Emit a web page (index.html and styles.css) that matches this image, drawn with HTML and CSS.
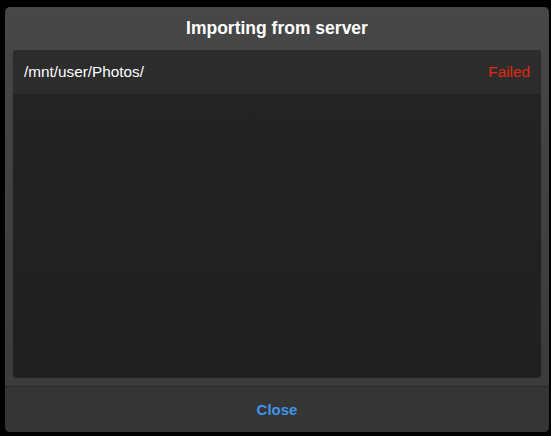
FILE: index.html
```html
<!DOCTYPE html>
<html lang="en">
<head>
    <meta charset="UTF-8">
    <title>Importing from server</title>
    <link rel="stylesheet" href="styles.css">
</head>
<body>
    <div class="dialog">
        <div class="dialog-title">Importing from server</div>
        <div class="dialog-body">
            <div class="list">
                <div class="list-row">
                    <span class="path">/mnt/user/Photos/</span>
                    <span class="status failed">Failed</span>
                </div>
            </div>
        </div>
        <div class="dialog-footer">
            <button class="btn-link">Close</button>
        </div>
    </div>
</body>
</html>
```

FILE: styles.css
```css
:root {
    --dialog-top: #474747;
    --dialog-bottom: #3a3a3a;
    --list-bg: #242424;
    --row-bg: #2c2c2c;
    --footer-bg: #353535;
    --link-color: #3e95e9;
    --fail-color: #e3290f;
}

html, body {
    margin: 0;
    padding: 0;
    background-color: #000;
    font-family: 'Liberation Sans', Arial, sans-serif;
    color: #fff;
}

.dialog {
    margin: 7px 2px 0 5px;
    width: 544px;
    height: 425px;
    display: flex;
    flex-direction: column;
    border-radius: 5px;
    overflow: hidden;
    background: linear-gradient(to bottom, var(--dialog-top), var(--dialog-bottom));
}

.dialog-title {
    height: 43px;
    display: flex;
    align-items: center;
    justify-content: center;
    font-size: 17.5px;
    font-weight: bold;
    padding-bottom: 1px;
    box-sizing: border-box;
}

.dialog-body {
    flex: 1;
    padding: 0 8px 9px 8px;
    display: flex;
}

.list {
    flex: 1;
    border-radius: 3px;
    background: linear-gradient(to bottom, var(--list-bg), #202020);
    box-shadow: 0 1px 1px rgba(0, 0, 0, 0.4);
    overflow: hidden;
}

.list-row {
    height: 44px;
    display: flex;
    align-items: center;
    justify-content: space-between;
    padding: 0 11px;
    background-color: var(--row-bg);
    font-size: 15.3px;
}

.failed {
    color: var(--fail-color);
}

.dialog-footer {
    height: 45px;
    border-top: 1px solid #2a2a2a;
    background-color: var(--footer-bg);
    display: flex;
    align-items: center;
    justify-content: center;
}

.btn-link {
    background: none;
    border: none;
    color: var(--link-color);
    font-family: inherit;
    font-size: 15px;
    font-weight: bold;
    padding: 0;
    cursor: pointer;
}
```
